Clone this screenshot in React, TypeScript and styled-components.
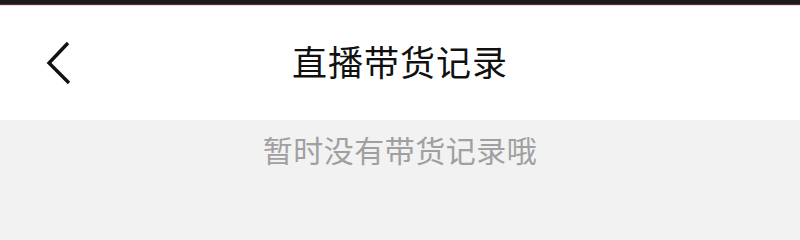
import React from "react";
import styled, { createGlobalStyle } from "styled-components";

const Global = createGlobalStyle`
  html, body { margin: 0; padding: 0; background: #f2f2f2; }
  body { font-family: "Noto Sans CJK SC", "Noto Sans", sans-serif; }
`;

const Page = styled.div`
  width: 800px;
  height: 201px;
  display: flex;
  flex-direction: column;
  overflow: hidden;
`;

const StatusStrip = styled.div`
  height: 6px;
  background: linear-gradient(#1d1a1f 0 4px, #5a2a36 4px 5px, #e6e0e2 5px 6px);
`;

const Header = styled.div`
  height: 114px;
  background: #ffffff;
  display: grid;
  grid-template-columns: 120px 1fr 120px;
  align-items: center;
`;

const BackButton = styled.button`
  border: 0;
  background: transparent;
  padding: 0 0 0 44px;
  height: 100%;
  display: flex;
  align-items: center;
  justify-content: flex-start;
  cursor: pointer;
`;

const Title = styled.h1`
  margin: 0;
  text-align: center;
  font-size: 35px;
  font-weight: 400;
  color: #111111;
  letter-spacing: 1px;
  line-height: 1;
  padding-bottom: 6px;
`;

const Empty = styled.div`
  flex: 1;
  background: #f2f2f2;
  display: flex;
  justify-content: center;
  padding-top: 11px;
  font-size: 30px;
  letter-spacing: 0.5px;
  color: #a0a0a0;
  line-height: 1.2;
`;

export default function App() {
  return (
    <>
      <Global />
      <Page>
        <StatusStrip />
        <Header>
          <BackButton aria-label="返回">
            <svg width="30" height="44" viewBox="0 0 30 44">
              <path d="M24 2 L5 22 L25 42" fill="none" stroke="#111" strokeWidth="3.4" strokeLinejoin="miter" />
            </svg>
          </BackButton>
          <Title>直播带货记录</Title>
          <div />
        </Header>
        <Empty>暂时没有带货记录哦</Empty>
      </Page>
    </>
  );
}
